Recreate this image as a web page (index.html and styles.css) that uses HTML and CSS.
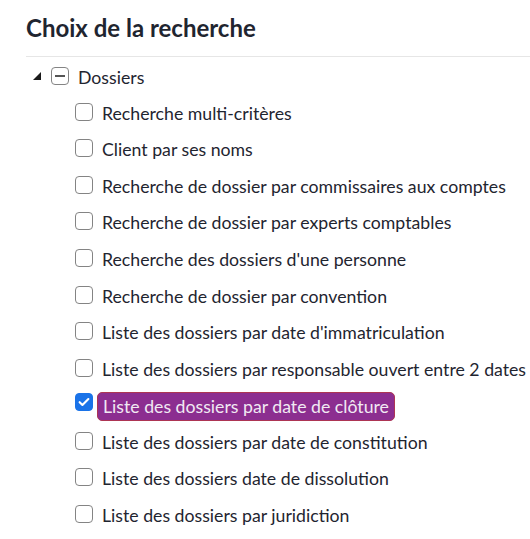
FILE: index.html
```html
<!DOCTYPE html>
<html lang="fr">
<head>
    <meta charset="UTF-8">
    <title>Choix de la recherche</title>
    <link rel="stylesheet" href="styles.css">
</head>
<body>
    <div class="panel">
        <h2 class="panel-title">Choix de la recherche</h2>
        <ul class="tree">
            <li class="tree-node">
                <div class="tree-row root">
                    <span class="toggle"></span>
                    <span class="check partial"></span>
                    <span class="label">Dossiers</span>
                </div>
                <ul class="tree-group">
                    <li class="tree-row"><span class="check"></span><span class="label">Recherche multi-critères</span></li>
                    <li class="tree-row"><span class="check"></span><span class="label">Client par ses noms</span></li>
                    <li class="tree-row"><span class="check"></span><span class="label">Recherche de dossier par commissaires aux comptes</span></li>
                    <li class="tree-row"><span class="check"></span><span class="label">Recherche de dossier par experts comptables</span></li>
                    <li class="tree-row"><span class="check"></span><span class="label">Recherche des dossiers d'une personne</span></li>
                    <li class="tree-row"><span class="check"></span><span class="label">Recherche de dossier par convention</span></li>
                    <li class="tree-row"><span class="check"></span><span class="label">Liste des dossiers par date d'immatriculation</span></li>
                    <li class="tree-row"><span class="check"></span><span class="label">Liste des dossiers par responsable ouvert entre 2 dates</span></li>
                    <li class="tree-row">
                        <span class="check checked">
                            <svg viewBox="0 0 16 16" width="14" height="14"><path d="M3 8.2l3.2 3.2L13 4.6" fill="none" stroke="#fff" stroke-width="2.4" stroke-linecap="round" stroke-linejoin="round"/></svg>
                        </span>
                        <span class="label selected">Liste des dossiers par date de clôture</span>
                    </li>
                    <li class="tree-row"><span class="check"></span><span class="label">Liste des dossiers par date de constitution</span></li>
                    <li class="tree-row"><span class="check"></span><span class="label">Liste des dossiers date de dissolution</span></li>
                    <li class="tree-row"><span class="check"></span><span class="label">Liste des dossiers par juridiction</span></li>
                </ul>
            </li>
        </ul>
    </div>
</body>
</html>
```

FILE: styles.css
```css
body, html {
    margin: 0;
    font-family: 'Lato', 'Liberation Sans', sans-serif;
    color: #1f2530;
    background: #fff;
    overflow: hidden;
}
.panel {
    padding: 13px 0 0 26px;
}
.panel-title {
    margin: 0;
    font-size: 24px;
    font-weight: 700;
    line-height: 30px;
    padding-bottom: 13px;
    border-bottom: 1px solid #e6e6e6;
}
.tree, .tree-group {
    list-style: none;
    margin: 0;
    padding: 0;
}
.tree {
    padding-top: 2px;
}
.tree-group {
    padding-left: 49px;
}
.tree-row {
    display: flex;
    align-items: center;
    height: 36.55px;
    font-size: 17.7px;
    white-space: nowrap;
}
.tree-row.root {
    height: 36px;
}
.toggle {
    width: 0;
    height: 0;
    margin: 0 10px 2px 7px;
    border-style: solid;
    border-width: 0 0 8px 8px;
    border-color: transparent transparent #1a1a1a transparent;
}
.check {
    box-sizing: border-box;
    width: 18px;
    height: 18px;
    border: 1px solid #848484;
    border-radius: 4px;
    background: #fff;
    margin-right: 9px;
    margin-top: -3px;
    flex-shrink: 0;
    display: flex;
    align-items: center;
    justify-content: center;
}
.check.partial::after {
    content: '';
    width: 10px;
    height: 2px;
    background: #555;
}
.check.checked {
    background: #1a73e8;
    border-color: #1a73e8;
    margin-top: -8px;
    margin-right: 4px;
}
.label.selected {
    background: #8c2e90;
    color: #f1e9f3;
    border: 1px solid #ad3553;
    border-radius: 5px;
    padding: 3px 5px 3px 5px;
    margin-top: 2px;
}
```
